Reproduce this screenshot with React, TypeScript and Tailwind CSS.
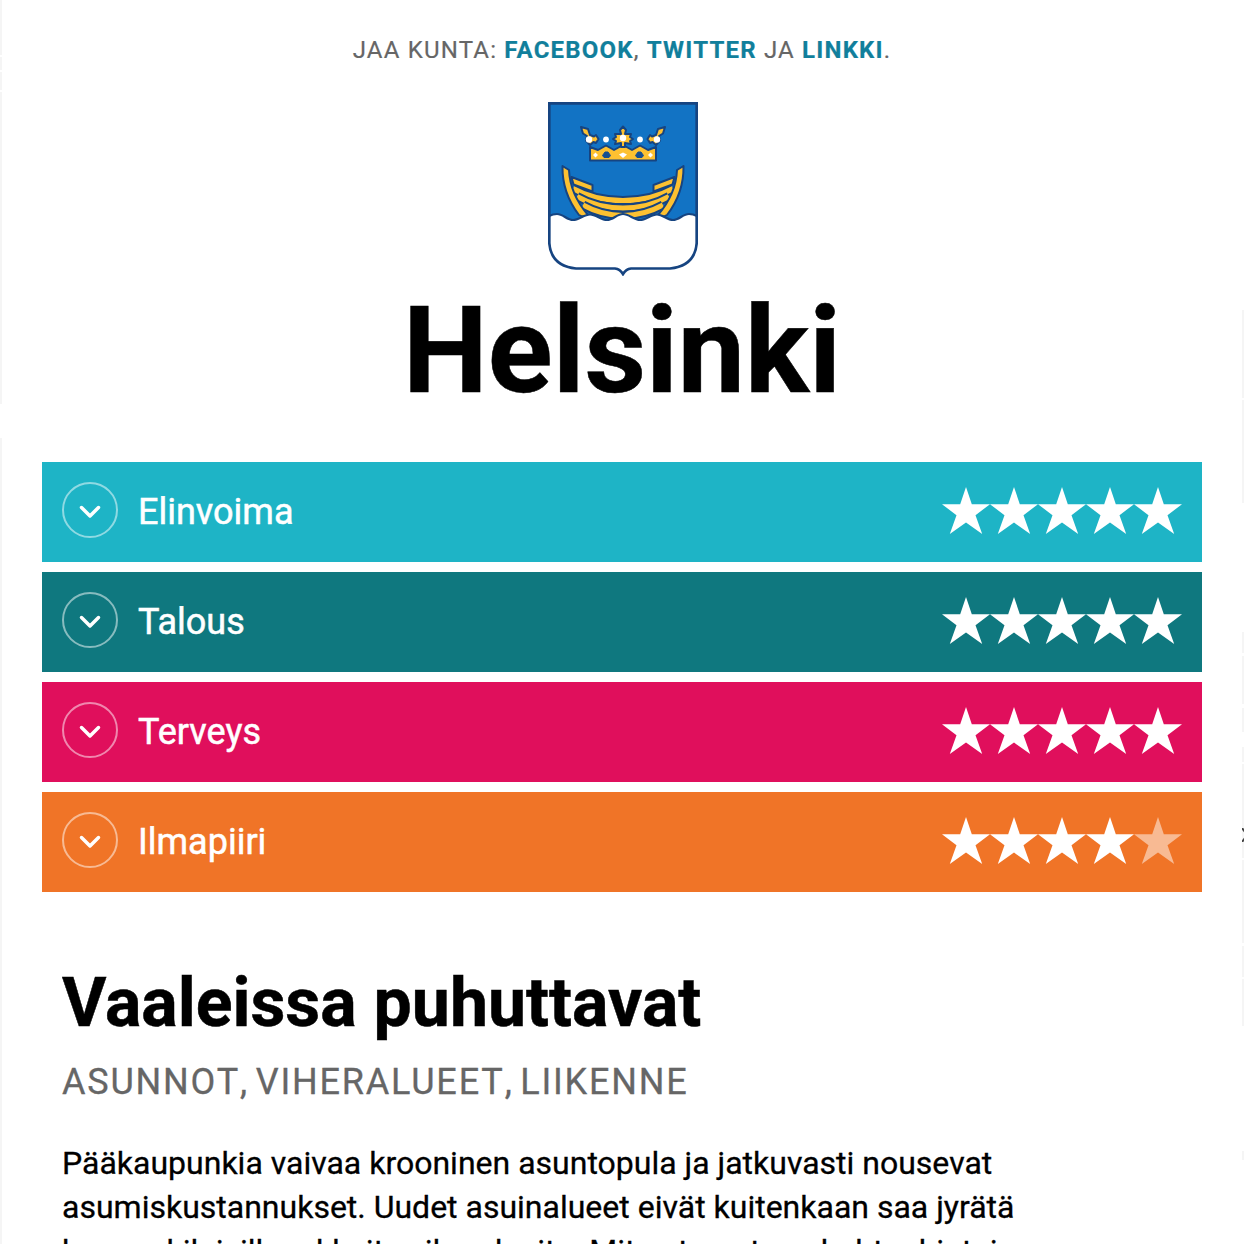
const categories = [
  { name: "Elinvoima", color: "bg-[#1eb4c6]", stars: 5 },
  { name: "Talous", color: "bg-[#0f787f]", stars: 5 },
  { name: "Terveys", color: "bg-[#e00f5c]", stars: 5 },
  { name: "Ilmapiiri", color: "bg-[#f07427]", stars: 4 },
];

function Star({ filled }: { filled: boolean }) {
  return (
    <svg viewBox="0 0 48 48" className={filled ? "size-12 text-white" : "size-12 text-white/50"} fill="currentColor">
      <path d="M24 1 29.8 18.2H48L33.5 29.2 40.2 48 24 36.6 7.8 48 14.5 29.2 0 18.2H18.2Z" />
    </svg>
  );
}

const shield = "M1.3 1.3H148.7V141Q147 164 122 166.5H83Q78 167 75 172Q72 167 67 166.5H28Q3 164 1.3 141Z";
const waves = "M1 114Q5 112 9 112C15 112 19 118 25 118S36 112.500 42 112.500S53 118 59 118S69 112 75 112S86 118 92 118S103 112.500 109 112.500S119 118 125 118S135 112 141 112Q145 112 149 114";
const planks = [
  "M25 86.500Q46 98.500 75 98.500Q104 98.500 125 86.500",
  "M29 94.500Q49 106 75 106Q101 106 121 94.500",
  "M35 103Q54 113.500 75 113.500Q96 113.500 115 103",
];

function Crest() {
  return (
    <svg viewBox="0 0 150 174" className="h-[174px] w-[150px]" fill="none">
      <path d={shield} fill="#1273c4" />
      {planks.map((d) => (
        <g key={d}>
          <path d={d} stroke="#164481" strokeWidth="9" />
          <path d={d} stroke="#fdc131" strokeWidth="5" />
        </g>
      ))}
      <g stroke="#164481" strokeWidth="2" strokeLinejoin="round" fill="#fdc131">
        <path d="M23.500 75 44.500 83V89.500L25.500 82.500ZM126.500 75 105.500 83V89.500L124.500 82.500Z" />
        <path d="M14.500 64 21 68Q22 92 40 113Q36 116 31 113Q14 91 14.500 64ZM135.500 64 129 68Q128 92 110 113Q114 116 119 113Q136 91 135.500 64Z" />
        <path d="M42 45 50 48 58 43.500 66 48 75 43 84 48 92 43.500 100 48 108 45V58.500H42Z" />
        <path d="M33 25 40 27 42 33 46 34.500 48 33 50.500 37 48 41 45.500 40 42 43 38 38.500 39 34 35 31.500ZM117 25 110 27 108 33 104 34.500 102 33 99.500 37 102 41 104.500 40 108 43 112 38.500 111 34 115 31.500Z" />
        <path d="M75 24.500 78 28 77 32 83 32 82 35 85 37 82 39 83 42 77 41 77 45H73L73 41 67 42 68 39 65 37 68 35 67 32 73 32 72 28Z" />
      </g>
      <g fill="#fff">
        <circle cx="41" cy="37.500" r="3.200" />
        <circle cx="58" cy="37.500" r="2.900" />
        <circle cx="75" cy="36" r="3.200" />
        <circle cx="92" cy="37.500" r="2.900" />
        <circle cx="109" cy="37.500" r="3.200" />
        <path d="m71 52.500 4-2 4 2-4 3.500ZM45 53l2.500-2.500L50 53l-2.500 2.500ZM100 53l2.500-2.500L105 53l-2.500 2.500Z" />
      </g>
      <path d="m54.500 53.500 2.500-3.500h3l2.500 3.500-1.500 2h-5ZM87.500 53.500l2.500-3.500h3l2.500 3.500-1.500 2h-5Z" fill="#164f91" stroke="#164f91" />
      <path d={`${waves}V141Q147 164 122 166.5H83Q78 167 75 172Q72 167 67 166.5H28Q3 164 1 141Z`} fill="#fff" />
      <path d={waves} stroke="#164481" strokeWidth="2.200" />
      <path d={shield} stroke="#164481" strokeWidth="2.700" />
    </svg>
  );
}

export default function App() {
  return (
    <div className="flex h-[1244px] w-[1244px] overflow-hidden bg-white font-['Roboto',sans-serif] text-black">
      <div className="flex w-0.5 shrink-0 flex-col gap-0.5">
        <div className="h-[55px] bg-[#f5f5f5]" />
        <div className="h-[13px] bg-[#f5f5f5]" />
        <div className="h-[18px] bg-[#f5f5f5]" />
        <div className="h-[312px] bg-[#f5f5f5]" />
        <div className="mt-8 grow bg-[#f5f5f5]" />
      </div>
      <main className="w-[1240px] shrink-0 px-10">
        <p className="mt-8 text-center text-[24px] leading-9 tracking-[1.2px] text-[#666] [-webkit-text-stroke:0.2px]">
          JAA KUNTA: <b className="text-[#117f9c]">FACEBOOK</b>, <b className="text-[#117f9c]">TWITTER</b> JA <b className="text-[#117f9c]">LINKKI</b>.
        </p>
        <div className="mt-[34px] flex justify-center pl-0.5"><Crest /></div>
        <h1 className="mt-[5px] text-center text-[120px] leading-[140px] font-bold [-webkit-text-stroke:0.5px]">Helsinki</h1>
        <div className="mt-[41px] flex flex-col gap-2.5">
          {categories.map((c) => (
            <div key={c.name} className={`flex h-[100px] items-center px-5 text-white ${c.color}`}>
              <div className="mb-1 flex size-14 items-center justify-center rounded-full border-2 border-white/50">
                <svg viewBox="0 0 22 14" className="mt-1 h-[14px] w-[22px]" fill="none" stroke="currentColor" strokeWidth="3.500" strokeLinecap="round" strokeLinejoin="round">
                  <path d="m2.500 2.500 8.500 8.500 8.500-8.500" />
                </svg>
              </div>
              <span className="ml-5 text-[36px] leading-10 [-webkit-text-stroke:0.5px]">{c.name}</span>
              <div className="mb-1 ml-auto flex">
                {[1, 2, 3, 4, 5].map((n) => <Star key={n} filled={n <= c.stars} />)}
              </div>
            </div>
          ))}
        </div>
        <section className="px-5 whitespace-nowrap">
          <h2 className="mt-[71px] text-[68px] leading-[80px] font-bold [-webkit-text-stroke:0.5px]">Vaaleissa puhuttavat</h2>
          <p className="mt-[15px] text-[36px] leading-[48px] tracking-[1.8px] text-[#666] [-webkit-text-stroke:0.3px]">
            ASUNNOT<span className="-mr-1 ml-[0.1px]">,</span> VIHERALUEET<span className="-mr-1 ml-[0.1px]">,</span> LIIKENNE
          </p>
          <p className="mt-[35px] text-[32px] leading-[44px] [-webkit-text-stroke:0.3px]">
            Pääkaupunkia vaivaa krooninen asuntopula ja jatkuvasti nousevat<br />
            asumiskustannukset. Uudet asuinalueet eivät kuitenkaan saa jyrätä<br />
            kaupunkilaisille rakkaita viheralueita. Miten turvataan kohtuuhintai-
          </p>
        </section>
      </main>
      <div className="flex w-0.5 shrink-0 flex-col">
        <div className="mt-[310px] h-[88px] bg-[#f5f5f5]" />
        <div className="mt-0.5 h-[103px] bg-[#f5f5f5]" />
        <div className="mt-[129px] h-[21px] bg-[#f5f5f5]" />
        <div className="mt-[3px] h-[48px] bg-[#f5f5f5]" />
        <div className="mt-1 h-[24px] bg-[#f5f5f5]" />
        <div className="mt-[15px] h-[15px] bg-[#f5f5f5]" />
        <div className="mt-0.5 h-[94px] bg-[#f5f5f5] pt-[64px]">
          <svg viewBox="0 0 2 14" className="h-[14px] w-0.5" fill="none" stroke="#444" strokeWidth="2">
            <path d="m0 0 3 4M0 14l3-4" />
          </svg>
        </div>
        <div className="mt-0.5 h-[83px] bg-[#f5f5f5]" />
        <div className="mt-[3px] h-[31px] bg-[#f5f5f5]" />
        <div className="mt-0.5 h-[47px] bg-[#f5f5f5]" />
        <div className="mt-[125px] h-[9px] bg-[#f5f5f5]" />
      </div>
    </div>
  );
}
